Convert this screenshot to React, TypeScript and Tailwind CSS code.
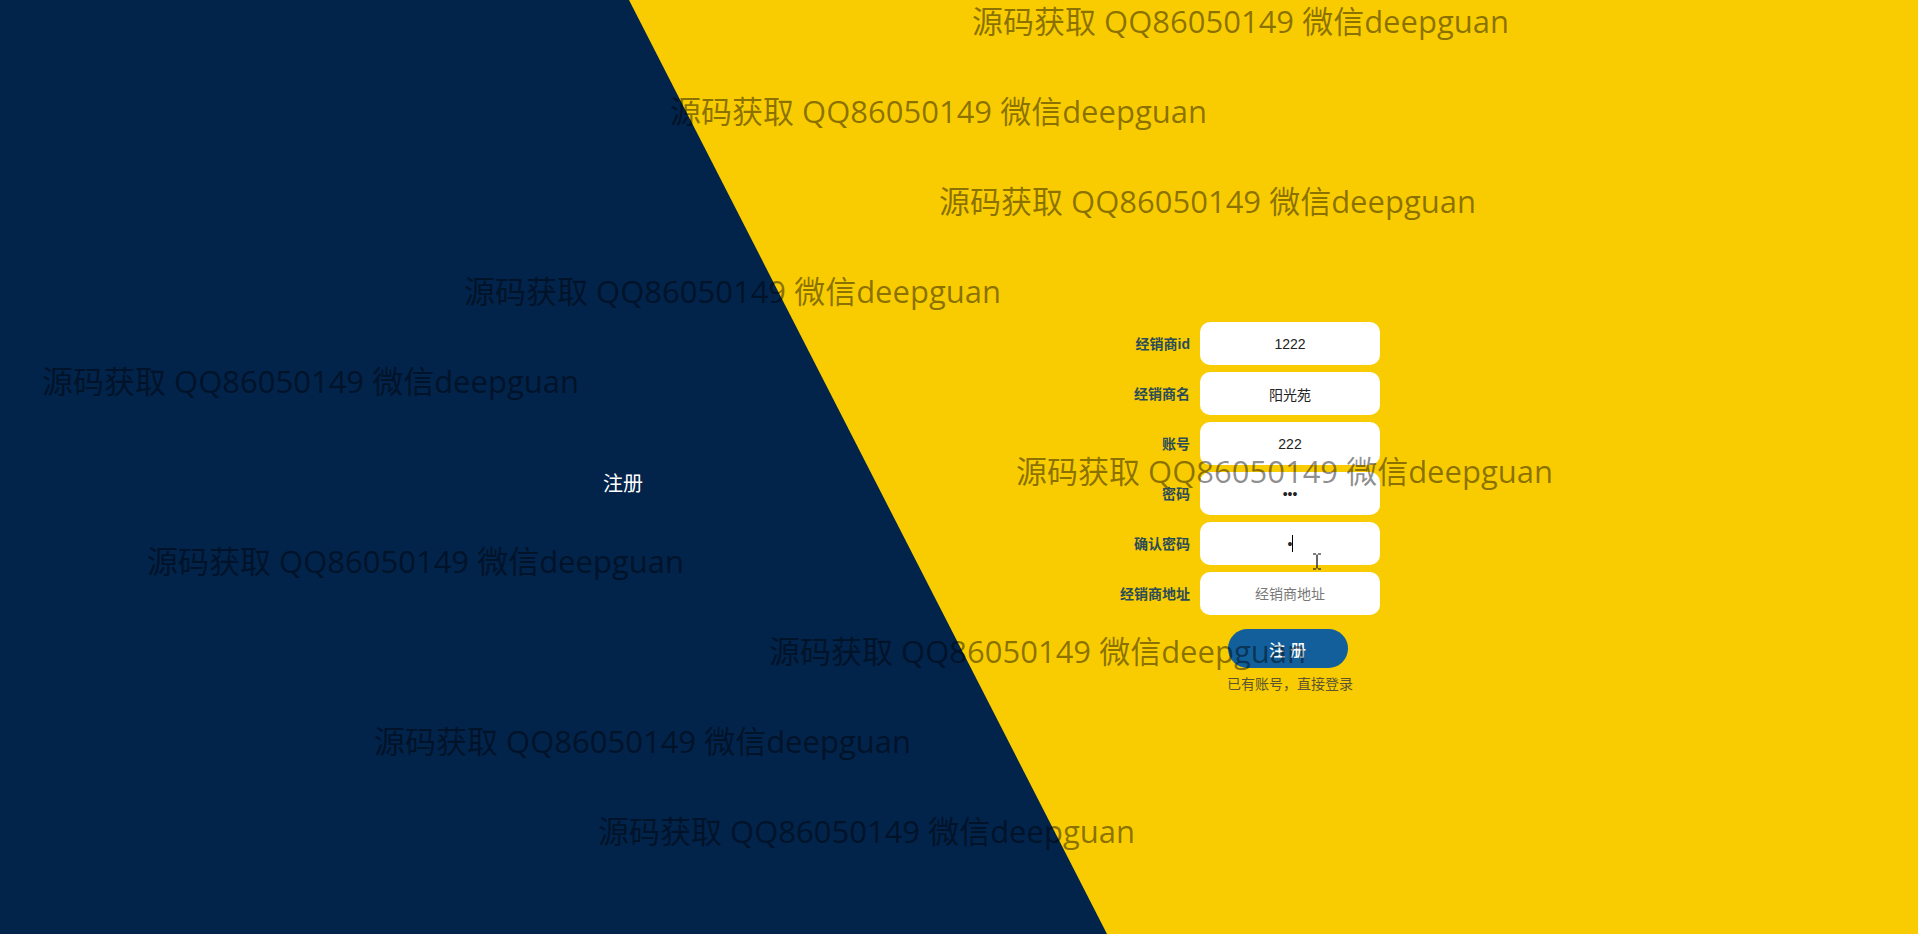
import {useState} from "react";

const marks = [
    {left: 972, top: 4},
    {left: 670, top: 94},
    {left: 939, top: 184},
    {left: 464, top: 274},
    {left: 42, top: 364},
    {left: 1016, top: 454},
    {left: 147, top: 544},
    {left: 769, top: 634},
    {left: 374, top: 724},
    {left: 598, top: 814},
];

const fields = [
    {label: "经销商id", value: "1222", type: "text"},
    {label: "经销商名", value: "阳光苑", type: "text"},
    {label: "账号", value: "222", type: "text"},
    {label: "密码", value: "123", type: "password"},
    {label: "确认密码", value: "1", type: "password"},
    {label: "经销商地址", value: "", type: "text"},
];

function Field({label, value, type, caret}: {label: string; value: string; type: string; caret?: boolean}) {
    const [val, setVal] = useState(value);

    return (
        <>
            <label className="text-right text-[14px] font-bold text-[#2b4b58] leading-none self-center">{label}</label>
            <div className="relative">
                <input
                    className="w-[180px] h-[43px] rounded-[10px] bg-white text-center text-[14px] text-[#222] outline-none placeholder:text-[#777]"
                    placeholder={label}
                    type={type}
                    value={val}
                    onChange={(e) => setVal(e.target.value)}
                />
                {caret && <span className="absolute left-[92px] top-[13px] w-px h-[17px] bg-black" />}
            </div>
        </>
    );
}

export default function App() {
    return (
        <div
            className="relative w-full h-[934px] overflow-hidden bg-[#f8cc00]"
            style={{fontFamily: '"Noto Sans CJK SC", "Liberation Sans", sans-serif'}}
        >
            <div className="absolute inset-0 bg-[#02234a] [clip-path:polygon(0_0,629px_0,1107px_100%,0_100%)]" />

            <div className="relative flex h-full">
                <div className="w-[1100px] pl-[603px] pt-[468px]">
                    <span className="text-[20px] text-white leading-[30px]">注册</span>
                </div>

                <div className="pt-[322px]">
                    <form className="grid grid-cols-[90px_180px] gap-x-[10px] gap-y-[7px]" style={{fontFamily: '"Liberation Sans", "Noto Sans CJK SC", sans-serif'}}>
                        {fields.map((f, i) => (
                            <Field key={f.label} caret={i === 4} label={f.label} type={f.type} value={f.value} />
                        ))}
                    </form>
                    <div className="flex flex-col items-center w-[180px] ml-[100px] mt-[14px]">
                        <button
                            className="w-[120px] h-[39px] -ml-[5px] rounded-full bg-[#125f9b] text-white text-[16px] font-medium tracking-[5px] pl-[5px]"
                            type="button"
                        >
                            注册
                        </button>
                        <span className="mt-[5px] text-[14px] text-[#5c5530] leading-[20px]">已有账号，直接登录</span>
                    </div>
                </div>
            </div>

            {/* mouse cursor */}
            <svg className="absolute left-[1312px] top-[553px]" fill="none" height="17" stroke="#000" strokeWidth="1.2" width="10" viewBox="0 0 10 17">
                <path d="M1 1h3M6 1h3M5 1.5v14M1 16h3M6 16h3" />
            </svg>

            {marks.map((m, i) => (
                <div
                    key={i}
                    className="absolute whitespace-nowrap text-[31px] leading-[34px] text-black/45 pointer-events-none"
                    style={{left: m.left, top: m.top, fontFamily: '"Open Sans", "Noto Sans CJK SC", sans-serif'}}
                >
                    源码获取 QQ86050149 微信deepguan
                </div>
            ))}
        </div>
    );
}
